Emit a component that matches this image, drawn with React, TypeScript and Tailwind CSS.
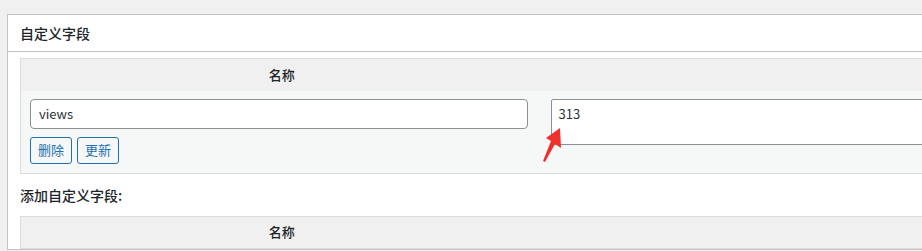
import React from "react";

const font = { fontFamily: '"Noto Sans CJK SC", "Noto Sans", sans-serif' };

const Arrow = () => (
  <svg
    className="absolute left-[536px] top-[124px]"
    width="30"
    height="42"
    viewBox="0 0 30 42"
  >
    <polygon points="24,4 25,24 19,20 9,38 7,37 15,17 10,14" fill="#f0302c" />
  </svg>
);

const HeadRow = () => (
  <thead>
    <tr className="bg-[#f0f0f1] h-[32px]">
      <th className="w-[522px] text-[13px] font-medium text-center">名称</th>
      <th />
    </tr>
  </thead>
);

const App = () => {
  return (
    <div
      className="relative w-[922px] h-[251px] overflow-hidden bg-[#f0f0f1] pt-[14px] text-[#1d2327]"
      style={font}
    >
      <div className="ml-[7px] w-[1000px] bg-white border border-[#c3c4c7]">
        <div className="h-[37px] flex items-center px-[12px] border-b border-[#c3c4c7]">
          <h2 className="text-[14px] font-medium">自定义字段</h2>
        </div>
        <div className="px-[12px] pt-[6px]">
          <table className="w-[960px] border border-[#dcdcde] border-collapse">
            <HeadRow />
            <tbody>
              <tr className="bg-[#f6f7f7] align-top">
                <td className="pl-[9px] pr-[14px] pt-[8px] pb-[9px]">
                  <input
                    readOnly
                    value="views"
                    className="w-[498px] h-[30px] px-[8px] border border-[#8c8f94] rounded-[4px] bg-white text-[13px] text-[#2c3338] outline-none"
                  />
                  <div className="flex gap-[5px] mt-[8px]">
                    <button className="h-[27px] px-[7px] border border-[#2271b1] rounded-[3px] text-[#2271b1] text-[13px] bg-[#f6f7f7]">
                      删除
                    </button>
                    <button className="h-[27px] px-[7px] border border-[#2271b1] rounded-[3px] text-[#2271b1] text-[13px] bg-[#f6f7f7]">
                      更新
                    </button>
                  </div>
                </td>
                <td className="pl-[8px] pt-[8px]">
                  <textarea
                    readOnly
                    value="313"
                    className="block w-[420px] h-[46px] px-[7px] py-[4px] border border-[#8c8f94] rounded-[2px] bg-white text-[13px] text-[#2c3338] resize-none outline-none"
                  />
                </td>
              </tr>
            </tbody>
          </table>
          <p className="mt-[11px] mb-[10px] text-[14px] font-medium">添加自定义字段:</p>
          <table className="w-[960px] border border-[#dcdcde] border-collapse">
            <HeadRow />
          </table>
        </div>
      </div>
      <Arrow />
    </div>
  );
};

export default App;
